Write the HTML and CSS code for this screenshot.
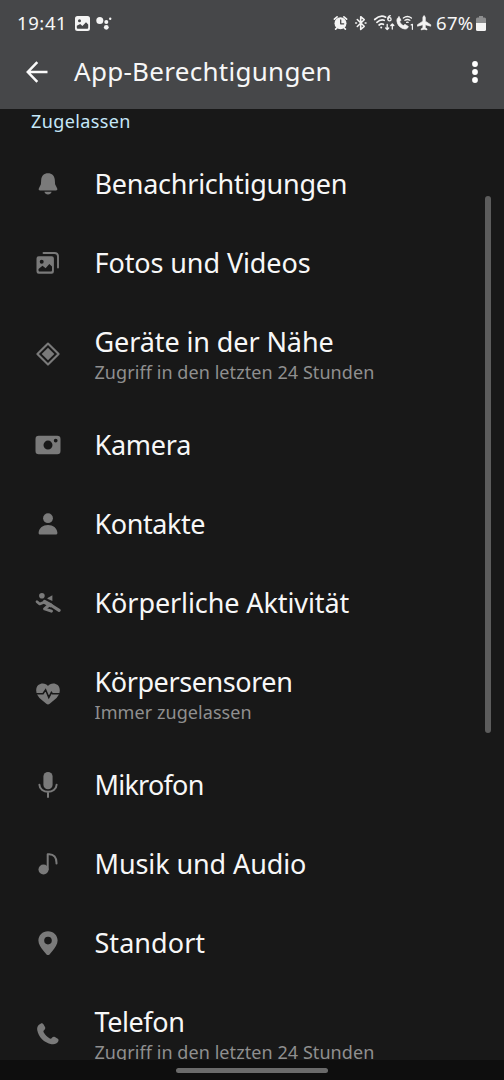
FILE: index.html
```html
<!DOCTYPE html>
<html lang="de">
<head>
<meta charset="utf-8">
<title>App-Berechtigungen</title>
<link rel="stylesheet" href="styles.css">
</head>
<body>
<div class="screen">
  <header class="top">
    <div class="status">
      <span class="clock">19:41</span>
      <svg class="st-photo" width="15" height="15" viewBox="0 0 15 15"><path fill="#f4f4f4" fill-rule="evenodd" d="M2.500 0h10A2.500 2.500 0 0 1 15 2.500v10a2.500 2.500 0 0 1-2.500 2.500h-10A2.500 2.500 0 0 1 0 12.500v-10A2.500 2.500 0 0 1 2.500 0zM1.800 9.700v1.800c0 .8.500 1.300 1.300 1.300h8.800c.8 0 1.300-.5 1.300-1.300V8.500L11 6.200 7.400 10 5.200 8z M4.500 3.200a1.500 1.500 0 1 0 0 3 1.500 1.500 0 0 0 0-3z"/></svg>
      <svg class="st-dots" width="16" height="14" viewBox="0 0 16 14" fill="#f4f4f4"><circle cx="3.800" cy="4.500" r="3.500"/><circle cx="10.300" cy="6" r="2"/><circle cx="10.300" cy="11.300" r="2.400"/><circle cx="14.200" cy="2.700" r="1.200"/></svg>
      <span class="grow"></span>
      <svg class="st-right" width="94" height="18" viewBox="332 14 94 18" fill="none" stroke="#f4f4f4" stroke-width="1.700" stroke-linecap="round" stroke-linejoin="round">
        <circle cx="340.500" cy="23.300" r="6" fill="#f4f4f4" stroke="none"/>
        <path d="M334.400 19.200l2.700-2.400M346.600 19.200l-2.700-2.400M336.800 28l-1.200 1.200M344.200 28l1.200 1.200"/>
        <path stroke="#464749" stroke-width="1.300" d="M340.700 20v3.800h3"/>
        <path stroke-width="1.600" d="M357.300 19.500l6.900 6.800-3.500 3.200V16.700l3.500 3-6.900 6.800M355.700 23h.8M365.200 23h.8"/>
        <path d="M374.700 19.500q5.700-5.200 11-2.300M376.900 22.300q3.600-3.200 7.300-2M379.100 25q2.100-1.700 4.300-.7"/>
        <circle cx="381.200" cy="27.600" r="1" fill="#f4f4f4" stroke="none"/>
        <path stroke-width="1.300" d="M390.300 15.700q-2.500.7-2.500 3.300M387.200 24.300v5.200m-1.500-1.500l1.500 1.500 1.500-1.500M392.300 29v-5m-1.500 1.500l1.500-1.500 1.500 1.500"/>
        <circle cx="389.500" cy="19.200" r="1.600" stroke-width="1.300"/>
        <path fill="#f4f4f4" stroke-width=".8" d="M399 16.900l2 3.200-1.300 1.700c.7 1.700 1.900 2.900 3.600 3.800l1.700-1.200 3.300 2.100c-.5 2-2.200 2.900-4.400 2.300-3.800-1-6.400-3.800-6.900-7.400-.3-2.200.5-3.800 2-4.500z"/>
        <path stroke-width="1.400" d="M403.400 18q4-3 8 0M405 20.300q2.400-1.700 4.800 0M406.700 22.300q.7-.4 1.400 0"/>
        <path stroke-width="1.200" d="M411.200 24.900l1.200-.6v5"/>
        <path fill="#f4f4f4" stroke-width=".7" d="M424.100 16c-.8 0-1.200.8-1.200 1.700v3.500l-5.400 3.500v1.500l5.400-1.500v3l-1.700 1.200v1l2.900-.7 2.900.7v-1l-1.700-1.200v-3l5.400 1.500v-1.500l-5.400-3.500v-3.500c0-.9-.4-1.700-1.200-1.700z"/>
      </svg>
      <span class="percent">67%</span>
      <svg class="st-batt" width="10" height="15" viewBox="0 0 10 15"><path fill="#8d8e8f" d="M3 0h4v1.500h1.500Q10 1.500 10 3v4.500H0V3q0-1.500 1.500-1.500H3z"/><path fill="#f4f4f4" d="M0 7h10v6.500q0 1.500-1.500 1.500h-7Q0 15 0 13.500z"/></svg>
    </div>
    <div class="bar">
      <svg class="back" width="22" height="22" viewBox="0 0 22 22" fill="none" stroke="#fafafa" stroke-width="2.500"><path d="M11.300 1.200L1.800 11l9.500 9.800M2 11h19.500"/></svg>
      <h1 class="title">App-Berechtigungen</h1>
      <svg class="more" width="6" height="22" viewBox="0 0 6 22" fill="#fff"><circle cx="3" cy="3" r="2.900"/><circle cx="3" cy="11" r="2.900"/><circle cx="3" cy="19" r="2.900"/></svg>
    </div>
  </header>

  <main class="content">
    <h2 class="section">Zugelassen</h2>
    <ul class="list">
      <li class="row">
        <svg class="icon" viewBox="0 0 26 26"><path d="M13 2.200c4 0 6.600 2.700 6.800 6.500l.3 4.600 2 4c.6 1.300.2 2.200-1.200 2.200H5.100c-1.400 0-1.800-.9-1.200-2.200l2-4 .3-4.600C6.400 4.900 9 2.200 13 2.200zM9.400 20.800h7.200c-.5 1.700-1.800 2.600-3.600 2.600s-3.100-.9-3.600-2.600z"/></svg>
        <div class="text"><span class="label tight">Benachrichtigungen</span></div>
      </li>
      <li class="row">
        <svg class="icon" viewBox="0 0 26 26"><path fill-rule="evenodd" d="M3.700 6.200h13a2.200 2.200 0 0 1 2.200 2.200v13.200a2.200 2.200 0 0 1-2.200 2.200h-13a2.200 2.200 0 0 1-2.200-2.200V8.400a2.200 2.200 0 0 1 2.200-2.200zM3.500 19v1.200c0 .9.500 1.400 1.400 1.400h10.700c.9 0 1.400-.5 1.400-1.400v-3.700l-2.700-2.600-3.700 4.300-3.100-2.400z M6.700 9.700a2 2 0 1 0 0 4 2 2 0 0 0 0-4z"/><path class="line" stroke-width="1.900" d="M8.500 3h11q3.500 0 3.500 3.500v11"/></svg>
        <div class="text"><span class="label">Fotos und Videos</span></div>
      </li>
      <li class="row row-two">
        <svg class="icon" viewBox="0 0 26 26"><path class="line" stroke-width="2.100" d="M13 2.500L23.600 13 13 23.600 2.400 13z"/><path d="M13 6.700l6.300 6.300-6.300 6.300L6.700 13z"/></svg>
        <div class="text"><span class="label">Geräte in der Nähe</span><span class="sub">Zugriff in den letzten 24 Stunden</span></div>
      </li>
      <li class="row">
        <svg class="icon" viewBox="0 0 26 26"><path fill-rule="evenodd" d="M3.700 3.800h18.600q3.200 0 3.200 3.200v12q0 3.200-3.200 3.200H3.700Q.5 22.200.5 19V7q0-3.200 3.200-3.200zM13 8.600a4.500 4.500 0 1 0 0 9 4.500 4.500 0 0 0 0-9zM20.700 6.700a1.900 1.900 0 1 0 0 3.800 1.900 1.900 0 0 0 0-3.800z"/></svg>
        <div class="text"><span class="label tight">Kamera</span></div>
      </li>
      <li class="row">
        <svg class="icon" viewBox="0 0 26 26"><circle cx="13" cy="7.200" r="4.900"/><path d="M5.300 23.500c-1.200 0-1.800-.7-1.700-1.800.4-4.600 4.300-7.600 9.400-7.600s9 3 9.400 7.600c.1 1.100-.5 1.800-1.700 1.800z"/></svg>
        <div class="text"><span class="label tighter">Kontakte</span></div>
      </li>
      <li class="row">
        <svg class="icon" viewBox="0 0 26 26"><circle cx="6.900" cy="5.800" r="2.800"/><path class="line" stroke-width="2.700" d="M2 11.700l2.700 2.300 5-2"/><path class="line" stroke-width="4" d="M9.700 11.900l6 3.400"/><path class="line" stroke-width="3.100" d="M15 14.500l9.100 5.900M13.500 15.500l-3.800 3.400 6.700 2.200"/><path d="M12.600 7.900l4.800-2.700v5.800l-5-2.200z"/></svg>
        <div class="text"><span class="label">Körperliche Aktivität</span></div>
      </li>
      <li class="row row-two">
        <svg class="icon" viewBox="0 0 26 26"><path d="M13 5C10.500 1.200 1.200 1.300 1.200 9.500q0 5 5.300 9.300l4.800 4q1.700 1.300 3.400 0l4.800-4q5.300-4.300 5.300-9.300C24.800 1.300 15.500 1.200 13 5z"/><path class="cut" d="M0 12.700h8l2.600-3.900 3.200 7.500 2.600-4.800 1 1.200H26"/></svg>
        <div class="text"><span class="label tighter">Körpersensoren</span><span class="sub">Immer zugelassen</span></div>
      </li>
      <li class="row">
        <svg class="icon" viewBox="0 0 26 26"><rect x="8.400" y="0" width="9.200" height="17.300" rx="4.600"/><path class="line" stroke-width="2" d="M4.400 12.800c.3 9.200 16.900 9.200 17.200 0M13 20v5"/></svg>
        <div class="text"><span class="label tightest">Mikrofon</span></div>
      </li>
      <li class="row">
        <svg class="icon" viewBox="0 0 26 26"><circle cx="8.500" cy="18.500" r="5"/><path class="line" stroke-width="2" d="M12.700 18.500V3.200h1.500c4.500 0 7.300 3.300 7.300 8.500v.8"/></svg>
        <div class="text"><span class="label">Musik und Audio</span></div>
      </li>
      <li class="row">
        <svg class="icon" viewBox="0 0 26 26"><path fill-rule="evenodd" d="M13 1.200c5.500 0 9.600 4 9.600 9.400 0 3.800-2.500 7-4.800 9.900l-3.300 3.900q-1.500 1.400-3 0l-3.300-3.900c-2.300-2.900-4.800-6.100-4.800-9.900 0-5.400 4.100-9.400 9.600-9.400zm0 5.600a3.800 3.800 0 1 0 0 7.600 3.800 3.800 0 0 0 0-7.600z"/></svg>
        <div class="text"><span class="label loose">Standort</span></div>
      </li>
      <li class="row row-two">
        <svg class="icon" viewBox="0 0 26 26"><path d="M5.600 2.700c1.200-.7 2.300-.3 3 .9l1.400 2.500c.6 1.200.2 2.100-.7 2.900-1 .8-1.100 1.600-.5 2.600 1.400 2.300 3.200 4.300 5.600 5.700 1 .6 1.900.4 2.600-.5.800-1 1.800-1.300 2.900-.7l2.500 1.500c1.200.7 1.500 1.800.8 3-1.300 2.100-3.700 3.200-6.700 2.600C9 21.700 3.500 16.200 2.200 9 1.800 6.200 3 3.900 5.600 2.700z"/></svg>
        <div class="text"><span class="label tighter">Telefon</span><span class="sub">Zugriff in den letzten 24 Stunden</span></div>
      </li>
    </ul>
  </main>
  <div class="scrollbar"></div>
  <footer class="nav"><span class="handle"></span></footer>
</div>
</body>
</html>
```

FILE: styles.css
```css
* { box-sizing: border-box; }
body { margin: 0; background: #181818; font-family: "Noto Sans", sans-serif; color: #f7f7f7; }
.screen { position: relative; display: flex; flex-direction: column; width: 504px; height: 1080px; overflow: hidden; background: #181818; }
.top { flex: none; height: 109px; background: #464749; }
.status { display: flex; align-items: center; height: 46px; padding: 0 18px 0 17px; white-space: nowrap; }
.clock { width: 58px; font-size: 18.5px; line-height: 24px; letter-spacing: 0.6px; }
.st-dots { margin-left: 6px; }
.grow { flex: 1; }
.st-right { flex: none; overflow: visible; }
.percent { width: 38px; margin: 0 2px 0 10px; font-size: 18.5px; line-height: 24px; letter-spacing: 0.3px; }
.bar { display: flex; align-items: center; height: 52px; padding: 0 26px; }
.title { flex: 1; margin: 0 0 2px 26px; font-size: 26px; font-weight: 400; line-height: 36px; letter-spacing: 0.28px; }
.content { flex: 1; min-height: 0; overflow: hidden; }
.section { margin: 0; height: 35.5px; padding-left: 31px; font-size: 18px; font-weight: 400; line-height: 24px; letter-spacing: 0.38px; color: #c5e7f8; }
.list { margin: 0; padding: 0; list-style: none; }
.row { display: flex; align-items: center; height: 79px; padding-left: 34.5px; white-space: nowrap; }
.row-two { height: 103px; }
.icon { flex: none; width: 26px; height: 26px; margin-right: 34px; fill: #7a7a7a; }
.line { fill: none; stroke: #7a7a7a; stroke-linecap: round; stroke-linejoin: round; }
.cut { fill: none; stroke: #181818; stroke-width: 1.6; }
.text { display: flex; flex-direction: column; align-items: flex-start; }
.label { font-size: 27px; line-height: 36px; letter-spacing: -0.1px; }
.tight { letter-spacing: -0.25px; }
.tighter { letter-spacing: -0.42px; }
.tightest { letter-spacing: -0.75px; }
.loose { letter-spacing: 0.05px; }
.row-two .text { padding-top: 1px; }
.sub { font-size: 18px; line-height: 25px; letter-spacing: 0.07px; color: #8f8f8f; }
.scrollbar { position: absolute; left: 485px; top: 196px; width: 6px; height: 537px; border-radius: 3px; background: #5c5c5c; }
.nav { flex: none; display: flex; justify-content: center; height: 20px; padding-top: 8px; background: #0e0e0e; }
.handle { width: 152px; height: 5px; border-radius: 3px; background: #6a6a6a; }
```
